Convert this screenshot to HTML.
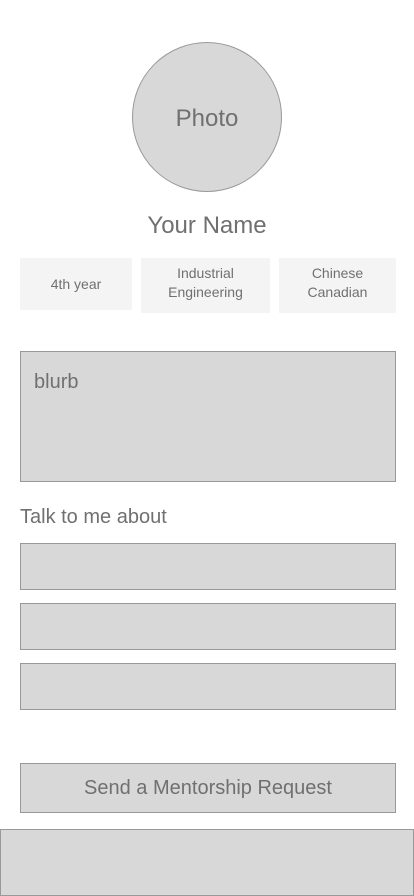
<!DOCTYPE html>
<html><head><style>
*{margin:0;padding:0;box-sizing:border-box}
body{width:414px;height:896px;background:#fff;position:relative;font-family:"Liberation Sans",sans-serif;color:#707070;overflow:hidden}
.a{position:absolute}
.box{background:#d8d8d8;border:1px solid #999}
.tag{background:#f4f4f4;display:flex;align-items:center;justify-content:center;text-align:center;font-size:14px;line-height:19px}
</style></head><body>
<div class="a box" style="left:132px;top:42px;width:150px;height:150px;border-radius:50%;display:flex;align-items:center;justify-content:center;font-size:24px;padding-top:4px">Photo</div>
<div class="a" style="left:0;width:414px;top:211px;text-align:center;font-size:24px;line-height:30px">Your Name</div>
<div class="a tag" style="left:20px;top:258px;width:112px;height:52px">4th year</div>
<div class="a tag" style="left:141px;top:258px;width:129px;height:55px;padding-bottom:6px">Industrial<br>Engineering</div>
<div class="a tag" style="left:279px;top:258px;width:117px;height:55px;padding-bottom:6px">Chinese<br>Canadian</div>
<div class="a box" style="left:20px;top:351px;width:376px;height:131px;font-size:20px;padding:19px 0 0 13px">blurb</div>
<div class="a" style="left:20px;top:505px;font-size:20px;line-height:24px">Talk to me about</div>
<div class="a box" style="left:20px;top:543px;width:376px;height:47px"></div>
<div class="a box" style="left:20px;top:603px;width:376px;height:47px"></div>
<div class="a box" style="left:20px;top:663px;width:376px;height:47px"></div>
<div class="a box" style="left:20px;top:763px;width:376px;height:50px;display:flex;align-items:center;justify-content:center;font-size:20px">Send a Mentorship Request</div>
<div class="a box" style="left:0;top:829px;width:414px;height:67px"></div>
</body></html>
